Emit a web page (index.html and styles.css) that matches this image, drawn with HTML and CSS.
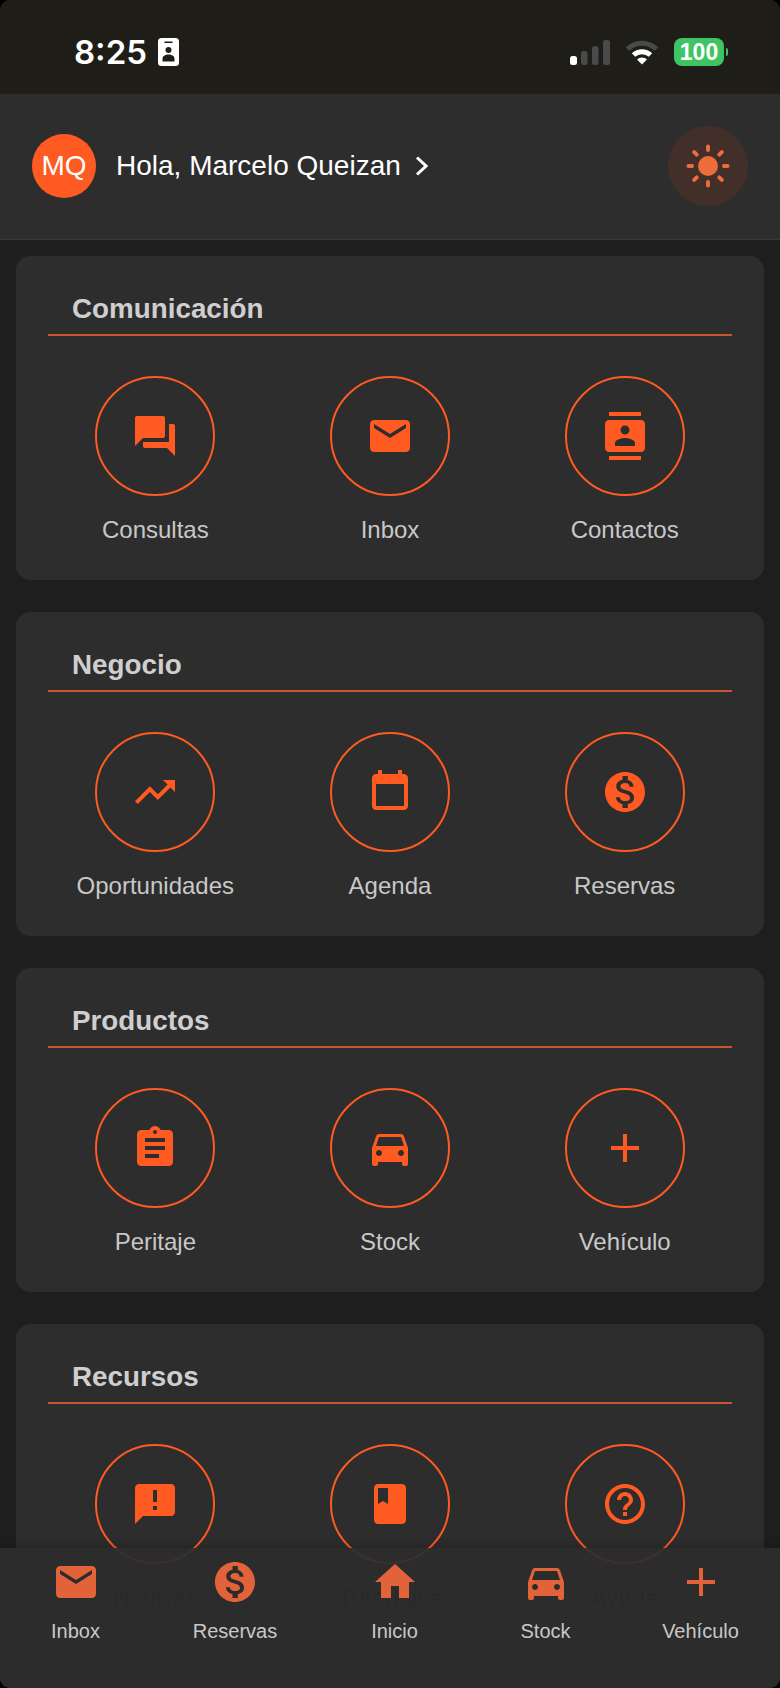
FILE: index.html
```html
<!DOCTYPE html>
<html lang="es">
<head>
<meta charset="utf-8">
<title>Inicio</title>
<link rel="stylesheet" href="styles.css">
</head>
<body>
<svg class="defs" aria-hidden="true">
  <symbol id="i-chat" viewBox="0 0 24 24"><path d="M21 6h-2v9H6v2c0 .55.45 1 1 1h11l4 4V7c0-.55-.45-1-1-1zm-4 6V3c0-.55-.45-1-1-1H3c-.55 0-1 .45-1 1v14l4-4h10c.55 0 1-.45 1-1z"/></symbol>
  <symbol id="i-mail" viewBox="0 0 24 24"><path d="M20 4H4c-1.1 0-1.99.9-1.99 2L2 18c0 1.1.9 2 2 2h16c1.1 0 2-.9 2-2V6c0-1.1-.9-2-2-2zm0 4l-8 5-8-5V6l8 5 8-5v2z"/></symbol>
  <symbol id="i-contacts" viewBox="0 0 24 24"><path d="M20 0H4v2h16V0zM4 24h16v-2H4v2zM20 4H4c-1.1 0-2 .9-2 2v12c0 1.1.9 2 2 2h16c1.1 0 2-.9 2-2V6c0-1.1-.9-2-2-2zm-8 2.75c1.24 0 2.25 1.01 2.25 2.25s-1.01 2.25-2.25 2.25S9.75 10.24 9.75 9 10.76 6.75 12 6.75zM17 17H7v-1.5c0-1.67 3.33-2.5 5-2.5s5 .83 5 2.5V17z"/></symbol>
  <symbol id="i-trend" viewBox="0 0 24 24"><path d="M16 6l2.29 2.29-4.88 4.88-4-4L2 16.59 3.41 18l6-6 4 4 6.3-6.29L22 12V6z"/></symbol>
  <symbol id="i-calendar" viewBox="0 0 24 24"><path d="M19 3h-1V1h-2v2H8V1H6v2H5c-1.1 0-2 .9-2 2v14c0 1.1.9 2 2 2h14c1.1 0 2-.9 2-2V5c0-1.1-.9-2-2-2zm0 16H5V8h14v11z"/></symbol>
  <symbol id="i-money" viewBox="0 0 24 24"><path d="M12 2C6.48 2 2 6.48 2 12s4.48 10 10 10 10-4.48 10-10S17.52 2 12 2zm1.41 16.09V20h-2.67v-1.93c-1.71-.36-3.16-1.46-3.27-3.4h1.96c.1 1.05.82 1.87 2.65 1.87 1.96 0 2.4-.98 2.4-1.59 0-.83-.44-1.61-2.67-2.14-2.48-.6-4.18-1.62-4.18-3.67 0-1.72 1.39-2.84 3.11-3.21V4h2.67v1.95c1.86.45 2.79 1.86 2.85 3.39H14.3c-.05-1.11-.64-1.87-2.22-1.87-1.5 0-2.4.68-2.4 1.64 0 .84.65 1.39 2.67 1.91s4.18 1.39 4.18 3.91c-.01 1.83-1.38 2.83-3.12 3.16z"/></symbol>
  <symbol id="i-clipboard" viewBox="0 0 24 24"><path d="M19 3h-4.18C14.4 1.84 13.3 1 12 1c-1.3 0-2.4.84-2.82 2H5c-1.1 0-2 .9-2 2v14c0 1.1.9 2 2 2h14c1.1 0 2-.9 2-2V5c0-1.1-.9-2-2-2zm-7 0c.55 0 1 .45 1 1s-.45 1-1 1-1-.45-1-1 .45-1 1-1zm2 14H7v-2h7v2zm3-4H7v-2h10v2zm0-4H7V7h10v2z"/></symbol>
  <symbol id="i-car" viewBox="0 0 24 24"><path d="M18.92 6.01C18.72 5.42 18.16 5 17.5 5h-11c-.66 0-1.21.42-1.42 1.01L3 12v8c0 .55.45 1 1 1h1c.55 0 1-.45 1-1v-1h12v1c0 .55.45 1 1 1h1c.55 0 1-.45 1-1v-8l-2.08-5.99zM6.5 16c-.83 0-1.5-.67-1.5-1.5S5.67 13 6.5 13s1.5.67 1.5 1.5S7.33 16 6.5 16zm11 0c-.83 0-1.5-.67-1.5-1.5s.67-1.5 1.5-1.5 1.5.67 1.5 1.5-.67 1.5-1.5 1.5zM5 11l1.5-4.5h11L19 11H5z"/></symbol>
  <symbol id="i-add" viewBox="0 0 24 24"><path d="M19 13h-6v6h-2v-6H5v-2h6V5h2v6h6v2z"/></symbol>
  <symbol id="i-alert" viewBox="0 0 24 24"><path d="M20 2H4c-1.1 0-1.99.9-1.99 2L2 22l4-4h14c1.1 0 2-.9 2-2V4c0-1.1-.9-2-2-2zm-7 9h-2V5h2v6zm0 4h-2v-2h2v2z"/></symbol>
  <symbol id="i-book" viewBox="0 0 24 24"><path d="M18 2H6c-1.1 0-2 .9-2 2v16c0 1.1.9 2 2 2h12c1.1 0 2-.9 2-2V4c0-1.1-.9-2-2-2zM6 4h5v8l-2.5-1.5L6 12V4z"/></symbol>
  <symbol id="i-help" viewBox="0 0 24 24"><path d="M11 18h2v-2h-2v2zm1-16C6.48 2 2 6.48 2 12s4.48 10 10 10 10-4.48 10-10S17.52 2 12 2zm0 18c-4.41 0-8-3.59-8-8s3.59-8 8-8 8 3.59 8 8-3.59 8-8 8zm0-14c-2.21 0-4 1.79-4 4h2c0-1.1.9-2 2-2s2 .9 2 2c0 2-3 1.75-3 5h2c0-2.25 3-2.5 3-5 0-2.21-1.79-4-4-4z"/></symbol>
  <symbol id="i-home" viewBox="0 0 24 24"><path d="M10 20v-6h4v6h5v-8h3L12 3 2 12h3v8z"/></symbol>
</svg>

<div class="screen">
  <div class="status">
    <div class="status-left">
      <span class="time">8:25</span>
      <svg class="badge" viewBox="0 0 21 28"><path fill-rule="evenodd" d="M3.5 0h14A3.5 3.5 0 0 1 21 3.5v21a3.5 3.5 0 0 1-3.5 3.5h-14A3.5 3.5 0 0 1 0 24.5v-21A3.5 3.5 0 0 1 3.5 0zM7 3.5a.8.8 0 0 0 0 1.600h7a.8.8 0 0 0 0-1.600zM10.500 9a3 3 0 1 0 0 6 3 3 0 0 0 0-6zM10.500 16.500c-3.500 0-6 1.800-6 4.300v2.700h12v-2.700c0-2.500-2.500-4.300-6-4.300z"/></svg>
    </div>
    <div class="status-right">
      <svg class="signal" viewBox="0 0 40 25">
        <rect class="on" x="0" y="16" width="7" height="9" rx="2.500"/>
        <rect class="off" x="11" y="11" width="6.500" height="14" rx="2.500"/>
        <rect class="off" x="22" y="6" width="6.500" height="19" rx="2.500"/>
        <rect class="off" x="33" y="0" width="7" height="25" rx="2.500"/>
      </svg>
      <svg class="wifi" viewBox="0 0 34 26">
        <path class="wifi-off" d="M2.500 10A21 21 0 0 1 31.500 10"/>
        <path class="wifi-on" d="M8.500 16A12.500 12.500 0 0 1 25.500 16"/>
        <path class="wifi-dot" d="M12 20.500A7 7 0 0 1 22 20.500L17 25.500z"/>
      </svg>
      <div class="battery">100</div>
    </div>
  </div>

  <header class="top">
    <div class="avatar">MQ</div>
    <span class="greeting">Hola, Marcelo Queizan</span>
    <svg class="chevron" viewBox="0 0 13 20"><path d="M2 1.500l9 8.500-9 8.500"/></svg>
    <button class="theme" type="button" aria-label="Tema">
      <svg class="sun" viewBox="0 0 48 48">
        <circle cx="24" cy="24" r="10"/>
        <path d="M24 4.500v3.500M24 40v3.500M4.500 24h3.500M40 24h3.500M10.200 10.200l2.500 2.500M35.300 35.300l2.500 2.500M37.800 10.200l-2.500 2.500M12.700 35.300l-2.500 2.500"/>
      </svg>
    </button>
  </header>

  <main class="content">
    <section class="card">
      <h2 class="card-title">Comunicación</h2>
      <div class="grid">
        <a class="tile"><span class="ring"><svg class="ic"><use href="#i-chat"/></svg></span><span class="tile-label">Consultas</span></a>
        <a class="tile"><span class="ring"><svg class="ic"><use href="#i-mail"/></svg></span><span class="tile-label">Inbox</span></a>
        <a class="tile"><span class="ring"><svg class="ic"><use href="#i-contacts"/></svg></span><span class="tile-label">Contactos</span></a>
      </div>
    </section>
    <section class="card">
      <h2 class="card-title">Negocio</h2>
      <div class="grid">
        <a class="tile"><span class="ring"><svg class="ic"><use href="#i-trend"/></svg></span><span class="tile-label">Oportunidades</span></a>
        <a class="tile"><span class="ring"><svg class="ic"><use href="#i-calendar"/></svg></span><span class="tile-label">Agenda</span></a>
        <a class="tile"><span class="ring"><svg class="ic"><use href="#i-money"/></svg></span><span class="tile-label">Reservas</span></a>
      </div>
    </section>
    <section class="card">
      <h2 class="card-title">Productos</h2>
      <div class="grid">
        <a class="tile"><span class="ring"><svg class="ic"><use href="#i-clipboard"/></svg></span><span class="tile-label">Peritaje</span></a>
        <a class="tile"><span class="ring"><svg class="ic"><use href="#i-car"/></svg></span><span class="tile-label">Stock</span></a>
        <a class="tile"><span class="ring"><svg class="ic"><use href="#i-add"/></svg></span><span class="tile-label">Vehículo</span></a>
      </div>
    </section>
    <section class="card">
      <h2 class="card-title">Recursos</h2>
      <div class="grid">
        <a class="tile"><span class="ring"><svg class="ic"><use href="#i-alert"/></svg></span><span class="tile-label under-nav">Noticias</span></a>
        <a class="tile"><span class="ring"><svg class="ic"><use href="#i-book"/></svg></span><span class="tile-label under-nav">Tutoriales</span></a>
        <a class="tile"><span class="ring"><svg class="ic"><use href="#i-help"/></svg></span><span class="tile-label under-nav">Ayuda</span></a>
      </div>
    </section>
  </main>

  <nav class="nav">
    <a class="nav-item"><svg class="ic nav-ic"><use href="#i-mail"/></svg><span class="nav-label">Inbox</span></a>
    <a class="nav-item"><svg class="ic nav-ic"><use href="#i-money"/></svg><span class="nav-label">Reservas</span></a>
    <a class="nav-item"><svg class="ic nav-ic"><use href="#i-home"/></svg><span class="nav-label">Inicio</span></a>
    <a class="nav-item"><svg class="ic nav-ic"><use href="#i-car"/></svg><span class="nav-label">Stock</span></a>
    <a class="nav-item"><svg class="ic nav-ic"><use href="#i-add"/></svg><span class="nav-label">Vehículo</span></a>
  </nav>
</div>
</body>
</html>
```
FILE: styles.css
```css
* { box-sizing: border-box; }

html {
  background: #000;
}

body {
  margin: 0;
  font-family: "Liberation Sans", Arial, sans-serif;
}

.defs {
  display: none;
}

.screen {
  position: relative;
  display: flex;
  flex-direction: column;
  width: 780px;
  height: 1688px;
  overflow: hidden;
  border-radius: 10px;
  background: #1e1e1e;
}

/* status bar */
.status {
  flex: none;
  display: flex;
  align-items: center;
  justify-content: space-between;
  height: 94px;
  padding: 10px 56px 0 74px;
  background: #1e1d17;
}

.status-left {
  display: flex;
  align-items: center;
  gap: 11px;
}

.time {
  font-family: Inter, "Liberation Sans", sans-serif;
  font-size: 33px;
  font-weight: 600;
  line-height: 40px;
  color: #fff;
}

.badge {
  width: 21px;
  height: 28px;
  fill: #fff;
}

.status-right {
  display: flex;
  align-items: center;
  gap: 15px;
}

.signal {
  width: 40px;
  height: 25px;
  margin-top: 1px;
}

.signal .on { fill: #fff; }
.signal .off { fill: #4a4a4a; }

.wifi {
  width: 34px;
  height: 26px;
}

.wifi-off, .wifi-on {
  fill: none;
  stroke-width: 5px;
}

.wifi-off { stroke: #4a4a4a; }
.wifi-on { stroke: #fff; }
.wifi-dot { fill: #fff; }

.battery {
  position: relative;
  width: 50px;
  height: 28px;
  border-radius: 8px;
  background: #3fc464;
  font-size: 23px;
  font-weight: 700;
  line-height: 28px;
  text-align: center;
  color: #fff;
}

.battery::after {
  content: "";
  position: absolute;
  top: 10px;
  right: -4px;
  width: 2px;
  height: 8px;
  border-radius: 0 3px 3px 0;
  background: #3fc464;
}

/* header */
.top {
  flex: none;
  display: flex;
  align-items: center;
  height: 146px;
  padding: 0 32px 1px;
  background: #2d2d2d;
  border-bottom: 1px solid #383838;
}

.avatar {
  display: flex;
  align-items: center;
  justify-content: center;
  width: 64px;
  height: 64px;
  border-radius: 50%;
  background: #ff5a22;
  font-size: 28px;
  color: #fff;
}

.greeting {
  margin-left: 20px;
  font-size: 28px;
  color: #fff;
}

.chevron {
  width: 13px;
  height: 20px;
  margin-left: 14px;
  fill: none;
  stroke: #fff;
  stroke-width: 3px;
}

.theme {
  display: flex;
  align-items: center;
  justify-content: center;
  width: 80px;
  height: 80px;
  margin-left: auto;
  padding: 0;
  border: 0;
  border-radius: 50%;
  background: #432f29;
}

.sun {
  width: 48px;
  height: 48px;
}

.sun circle { fill: #ee6b3a; }

.sun path {
  fill: none;
  stroke: #ee6b3a;
  stroke-width: 4px;
  stroke-linecap: round;
}

/* cards */
.content {
  flex: 1;
  display: flex;
  flex-direction: column;
  gap: 32px;
  min-height: 0;
  padding: 16px;
  overflow: hidden;
}

.card {
  flex: none;
  height: 324px;
  padding-top: 37px;
  border-radius: 14px;
  background: #2d2d2d;
}

.card-title {
  margin: 0 32px;
  padding: 0 24px 9px;
  border-bottom: 2px solid #c8552f;
  font-size: 27.800px;
  font-weight: 700;
  line-height: 32px;
  color: #cfcfcf;
}

.grid {
  display: grid;
  grid-template-columns: repeat(3, 1fr);
  margin-top: 40px;
  padding: 0 22px;
}

.tile {
  display: flex;
  flex-direction: column;
  align-items: center;
  gap: 20px;
}

.ring {
  display: flex;
  align-items: center;
  justify-content: center;
  width: 120px;
  height: 120px;
  border: 2px solid #ff5a22;
  border-radius: 50%;
}

.ic {
  width: 48px;
  height: 48px;
  fill: #ff5a22;
}

.tile-label {
  font-size: 24px;
  line-height: 28px;
  color: #c8c8c8;
}

.tile-label.under-nav {
  color: #000;
}

/* bottom bar */
.nav {
  position: absolute;
  left: 0;
  right: 0;
  bottom: 0;
  display: grid;
  grid-template-columns: 151px 168px 151px 151px 159px;
  height: 140px;
  padding-top: 10px;
  background: rgba(45, 45, 45, 0.92);
  box-shadow: 0 -3px 8px rgba(0, 0, 0, 0.18);
}

.nav-item {
  display: flex;
  flex-direction: column;
  align-items: center;
  gap: 13px;
}

.nav-ic {
  fill: #e2633a;
}

.nav-label {
  font-size: 20px;
  line-height: 24px;
  color: #c8c8c8;
}
```
